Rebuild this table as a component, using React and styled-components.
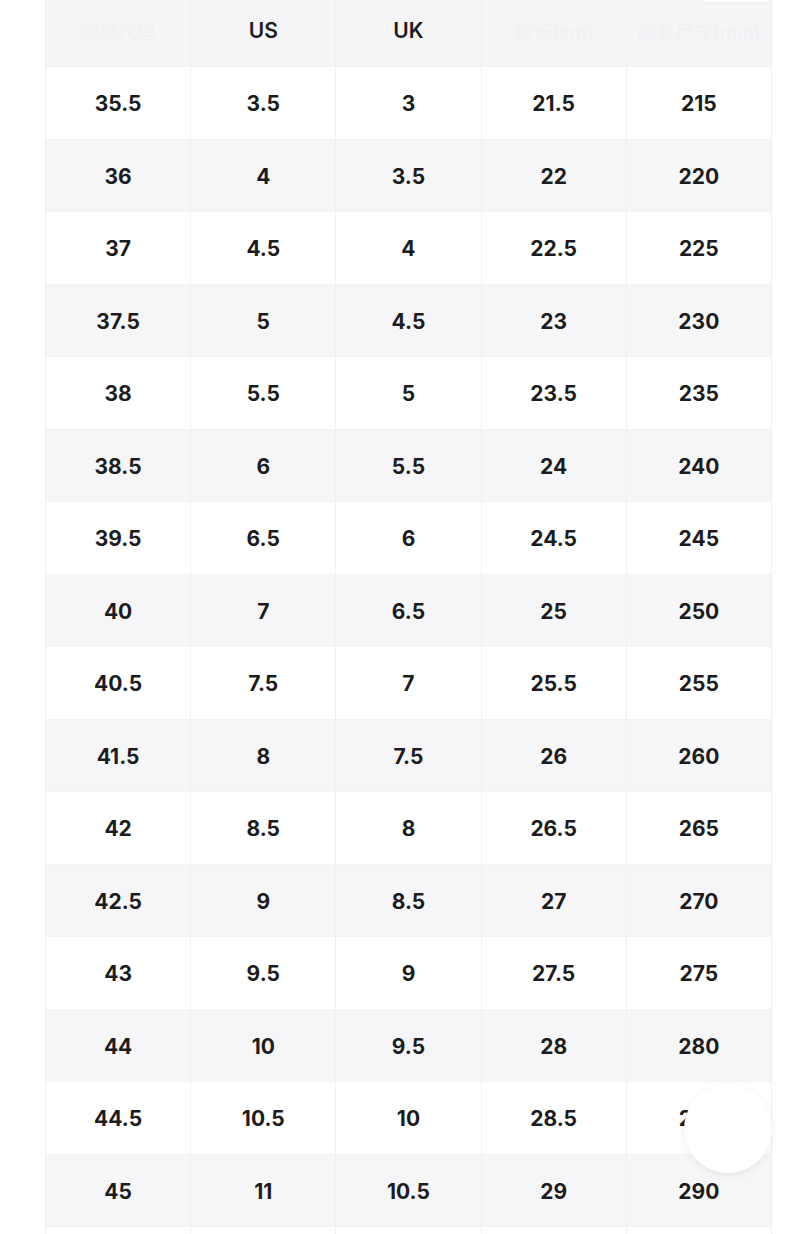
import React from "react";
import styled, { createGlobalStyle } from "styled-components";

const Global = createGlobalStyle`
  html, body { margin: 0; padding: 0; background: #ffffff; }
  body { font-family: Inter, "Noto Sans CJK SC", sans-serif; }
`;

const Page = styled.div`
  position: relative;
  width: 790px;
  height: 1234px;
  overflow: hidden;
  background: #ffffff;
`;

const Table = styled.div`
  margin: -5px 0 0 45px;
  width: 726px;
  display: grid;
  grid-template-columns: repeat(5, 145.2px);
  grid-auto-rows: 72.53px;
  grid-template-rows: 72px;
  border-left: 1px solid #f1f1f3;
`;

const Cell = styled.div`
  display: flex;
  align-items: center;
  justify-content: center;
  padding-top: 2px;
  background: ${(p) => (p.$shade ? "#f6f6f8" : "#ffffff")};
  border-right: 1px solid #f0f0f2;
  border-bottom: 1px solid #f3f3f5;
  box-sizing: border-box;
  font-size: 21px;
  font-weight: 700;
  color: #1c1c1e;
`;

const HeadCell = styled(Cell)`
  background: #f5f5f7;
  padding-top: 0;
  color: ${(p) => (p.$faint ? "#f1f1f4" : "#1c1c1e")};
  font-size: ${(p) => (p.$faint ? "19px" : "21px")};
  font-weight: ${(p) => (p.$faint ? 500 : 600)};
`;

const TopTab = styled.div`
  position: absolute;
  top: 0;
  left: 703px;
  width: 66px;
  height: 2px;
  background: #ffffff;
  border-bottom: 1px solid #ececee;
`;

const FloatBtn = styled.div`
  position: absolute;
  left: 684px;
  top: 1085px;
  width: 88px;
  height: 88px;
  border-radius: 50%;
  background: #ffffff;
  box-shadow: 0 2px 8px rgba(0, 0, 0, 0.07);
`;

const headers = [
  { t: "欧码尺码", faint: true },
  { t: "US" },
  { t: "UK" },
  { t: "脚长(cm)", faint: true },
  { t: "内长尺寸(mm)", faint: true },
];

const rows = [
  ["35.5", "3.5", "3", "21.5", "215"],
  ["36", "4", "3.5", "22", "220"],
  ["37", "4.5", "4", "22.5", "225"],
  ["37.5", "5", "4.5", "23", "230"],
  ["38", "5.5", "5", "23.5", "235"],
  ["38.5", "6", "5.5", "24", "240"],
  ["39.5", "6.5", "6", "24.5", "245"],
  ["40", "7", "6.5", "25", "250"],
  ["40.5", "7.5", "7", "25.5", "255"],
  ["41.5", "8", "7.5", "26", "260"],
  ["42", "8.5", "8", "26.5", "265"],
  ["42.5", "9", "8.5", "27", "270"],
  ["43", "9.5", "9", "27.5", "275"],
  ["44", "10", "9.5", "28", "280"],
  ["44.5", "10.5", "10", "28.5", "285"],
  ["45", "11", "10.5", "29", "290"],
  ["", "", "", "", ""],
];

export default function App() {
  return (
    <Page>
      <Global />
      <Table>
        {headers.map((h, i) => (
          <HeadCell key={"h" + i} $faint={h.faint}>
            {h.t}
          </HeadCell>
        ))}
        {rows.map((r, ri) =>
          r.map((v, ci) => (
            <Cell key={ri + "-" + ci} $shade={ri % 2 === 1}>
              {v}
            </Cell>
          ))
        )}
      </Table>
      <TopTab />
      <FloatBtn />
    </Page>
  );
}
